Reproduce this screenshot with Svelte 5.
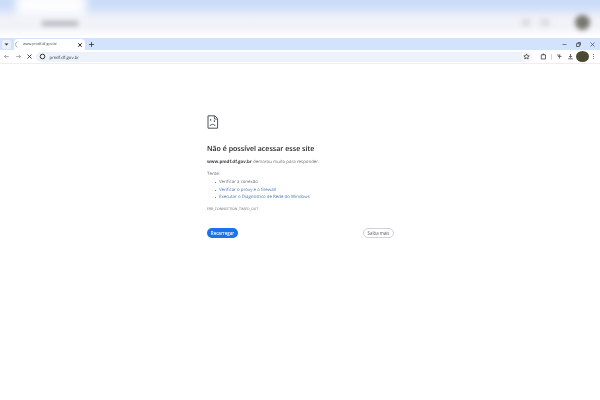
<script>
  const tips = [
    { text: 'Verificar a conexão', link: false },
    { text: 'Verificar o proxy e o firewall', link: true },
    { text: 'Executar o Diagnóstico de Rede do Windows', link: true }
  ];
</script>

<div class="screen">
  <div class="outer">
    <div class="outer-blue"></div>
    <div class="outer-tab"></div>
    <div class="outer-addr"></div>
    <div class="outer-icon one"></div>
    <div class="outer-icon two"></div>
    <div class="outer-avatar"></div>
  </div>

  <div class="tabbar">
    <div class="tabsearch">
      <svg width="7" height="7" viewBox="0 0 7 7"><path d="M1.5 2.5 L3.5 4.5 L5.5 2.5 Z" fill="#333"/></svg>
    </div>
    <div class="tab">
      <svg class="spin" width="7" height="7" viewBox="0 0 7 7"><path d="M3.5 0.8 A2.8 2.8 0 0 0 3.5 6.2" fill="none" stroke="#9aa0a6" stroke-width="0.8"/></svg>
      <span class="tabtitle">www.pmdf.df.gov.br</span>
      <svg class="tabclose" width="6" height="6" viewBox="0 0 6 6"><path d="M1.2 1.2 L4.8 4.8 M4.8 1.2 L1.2 4.8" stroke="#333" stroke-width="1"/></svg>
    </div>
    <svg class="newtab" width="7" height="7" viewBox="0 0 7 7"><path d="M3.5 1 V6 M1 3.5 H6" stroke="#444" stroke-width="0.9"/></svg>
    <div class="spacer"></div>
    <div class="winctl">
      <svg width="7" height="7" viewBox="0 0 7 7"><path d="M1.5 3.5 H5.5" stroke="#555" stroke-width="0.7"/></svg>
      <svg width="7" height="7" viewBox="0 0 7 7"><path d="M2.6 1.5 H5.5 V4.4 M1.5 2.6 H4.4 V5.5 H1.5 Z" fill="none" stroke="#444" stroke-width="0.8"/></svg>
      <svg width="7" height="7" viewBox="0 0 7 7"><path d="M1.5 1.5 L5.5 5.5 M5.5 1.5 L1.5 5.5" stroke="#444" stroke-width="0.7"/></svg>
    </div>
  </div>

  <div class="toolbar">
    <div class="navs">
      <svg width="7" height="7" viewBox="0 0 7 7"><path d="M5.8 3.5 H1.5 M3.2 1.8 L1.5 3.5 L3.2 5.2" fill="none" stroke="#8a8d91" stroke-width="0.7"/></svg>
      <svg width="7" height="7" viewBox="0 0 7 7"><path d="M1.2 3.5 H5.5 M3.8 1.8 L5.5 3.5 L3.8 5.2" fill="none" stroke="#8a8d91" stroke-width="0.7"/></svg>
      <svg width="7" height="7" viewBox="0 0 7 7"><path d="M1.5 1.5 L5.5 5.5 M5.5 1.5 L1.5 5.5" stroke="#333" stroke-width="0.9"/></svg>
    </div>
    <div class="omnibox">
      <svg class="site" width="7" height="7" viewBox="0 0 7 7"><circle cx="3.5" cy="3.5" r="2.3" fill="none" stroke="#333" stroke-width="1"/></svg>
      <span class="url">pmdf.df.gov.br</span>
      <div class="spacer"></div>
      <div class="star">
        <svg width="7" height="7" viewBox="0 0 7 7"><path d="M3.5 0.9 L4.3 2.7 L6.2 2.9 L4.8 4.1 L5.2 6 L3.5 5 L1.8 6 L2.2 4.1 L0.8 2.9 L2.7 2.7 Z" fill="none" stroke="#333" stroke-width="0.7"/></svg>
      </div>
    </div>
    <div class="tools">
      <svg class="ext" width="7" height="7" viewBox="0 0 7 7"><path d="M1.3 1.8 H5.5 V6 H1.3 Z M2.8 1.8 V1 H4 V1.8" fill="none" stroke="#444" stroke-width="0.8"/></svg>
      <span class="sep"></span>
      <svg class="cast" width="7" height="7" viewBox="0 0 7 7"><path d="M1 2 H4.5 M2 3.5 H5.5 M3.5 2 V5.5" fill="none" stroke="#555" stroke-width="0.8"/></svg>
      <svg class="dl" width="7" height="7" viewBox="0 0 7 7"><path d="M3.5 1 V4.4 M2 3 L3.5 4.5 L5 3 M1.2 5.8 H5.8" fill="none" stroke="#444" stroke-width="0.8"/></svg>
      <span class="avatar"></span>
      <svg class="menu" width="3" height="7" viewBox="0 0 3 7"><circle cx="1.5" cy="1.5" r="0.5" fill="#555"/><circle cx="1.5" cy="3.5" r="0.5" fill="#555"/><circle cx="1.5" cy="5.5" r="0.5" fill="#555"/></svg>
    </div>
  </div>

  <main class="page">
    <div class="content">
      <svg class="sad" width="12" height="14" viewBox="0 0 12 14">
        <path d="M1 0.8 H7.8 L10.6 3.6 V13.2 H1 Z" fill="none" stroke="#3c4043" stroke-width="0.9"/>
        <path d="M7.4 1 V4 H10.4" fill="none" stroke="#3c4043" stroke-width="0.8"/>
        <rect x="3" y="4.2" width="1.2" height="1.4" fill="#3c4043"/>
        <rect x="6.8" y="5.4" width="1.2" height="1.4" fill="#3c4043"/>
        <path d="M3 11 C4.2 8.8 6.8 8.8 8.4 11" fill="none" stroke="#3c4043" stroke-width="0.9"/>
      </svg>
      <h1>Não é possível acessar esse site</h1>
      <p class="lead"><strong>www.pmdf.df.gov.br</strong> demorou muito para responder.</p>
      <p class="try">Tente:</p>
      <ul>
        {#each tips as tip}
          <li class:link={tip.link}>{tip.text}</li>
        {/each}
      </ul>
      <p class="code">ERR_CONNECTION_TIMED_OUT</p>
      <div class="actions">
        <button class="reload">Recarregar</button>
        <button class="more">Saiba mais</button>
      </div>
    </div>
  </main>
</div>

<style>
  :global(body) { margin: 0; background: #fff; }
  .screen {
    width: 600px; height: 400px; overflow: hidden;
    display: flex; flex-direction: column;
    font-family: "Open Sans", "Noto Sans", sans-serif;
    color: #3c4043;
    filter: blur(0.3px);
    text-rendering: geometricPrecision;
  }
  .outer {
    height: 38px; flex: none; position: relative; overflow: hidden;
    background: linear-gradient(#f2f4fa 0, #f0f2f8 26px, #f9fafd 33px, #fff 37px);
  }
  .outer-blue {
    position: absolute; left: -10px; right: -10px; top: -10px; height: 22px;
    background: #cbdcf8; filter: blur(4px);
  }
  .outer-tab {
    position: absolute; left: 16px; top: -6px; width: 70px; height: 22px;
    background: #fdfdfe; filter: blur(5px);
  }
  .outer-addr {
    position: absolute; left: 42px; top: 21px; width: 36px; height: 5px;
    background: #b4b6bc; filter: blur(2.5px);
  }
  .outer-icon {
    position: absolute; top: 19px; width: 8px; height: 7px;
    background: #d9dadd; filter: blur(2.5px);
  }
  .one { left: 522px; }
  .two { left: 541px; }
  .outer-avatar {
    position: absolute; left: 575px; top: 15px; width: 15px; height: 15px; border-radius: 50%;
    background: #77776f; filter: blur(2.5px);
  }
  .tabbar {
    height: 12px; flex: none; background: #d3e3fd;
    display: flex; align-items: flex-end;
  }
  .tabsearch {
    width: 9px; height: 9px; margin: 0 3px 1.5px 2px; border-radius: 2px;
    background: #e9f0fb; display: flex; align-items: center; justify-content: center;
  }
  .tab {
    width: 71px; height: 11px; background: #fff; border-radius: 4px 4px 0 0;
    display: flex; align-items: center; padding: 0 2px 0 0; box-sizing: border-box;
  }
  .tabtitle { font-size: 3.6px; line-height: 6px; padding-top: 1px; margin-left: 2px; color: #44474a; white-space: nowrap; flex: 1; }
  .newtab { margin: 0 0 2.5px 3px; }
  .spacer { flex: 1; }
  .winctl { display: flex; gap: 7px; margin: 0 4px 2.5px 0; }
  .toolbar {
    height: 14px; flex: none; background: #fff; border-bottom: 1px solid #eceef1; box-sizing: border-box;
    display: flex; align-items: center;
  }
  .navs { display: flex; gap: 4.5px; margin-left: 3px; }
  .omnibox {
    width: 496px; height: 10px; margin-left: 3px; border-radius: 5px; background: #edf2fa;
    display: flex; align-items: center; padding: 0 0 0 3px; box-sizing: border-box;
  }
  .url { font-size: 4.3px; line-height: 6px; padding-top: 2px; margin-left: 3.5px; color: #3c4043; white-space: nowrap; }
  .star { width: 11px; height: 10px; display: flex; align-items: center; justify-content: center; background: #f4f6fb; border-radius: 5px; }
  .tools { display: flex; align-items: center; margin-left: 8px; }
  .sep { width: 0.6px; height: 6px; background: #d0d3d8; margin: 0 4px 0 4px; }
  .dl { margin-left: 4px; }
  .avatar { width: 13px; height: 11px; border-radius: 50%; background: #4d4a33; margin-left: 2px; }
  .menu { margin-left: 3px; }
  .page { flex: 1; background: #fff; padding: 51px 0 0 207px; }
  .content { width: 187px; }
  .sad { display: block; }
  h1 { margin: 15px 0 0; font-size: 7.05px; font-weight: 600; line-height: 11px; color: #202124; white-space: nowrap; }
  p { margin: 0; }
  .lead { margin-top: 4px; font-size: 4.4px; line-height: 7px; color: #6b6f74; white-space: nowrap; }
  .lead strong { color: #3c4043; font-weight: 700; }
  .try { margin-top: 5px; font-size: 4.4px; line-height: 7px; color: #6b6f74; }
  ul { list-style: none; margin: 1px 0 0; padding: 0 0 0 12px; font-size: 4.4px; line-height: 7.5px; color: #6b6f74; }
  li { white-space: nowrap; position: relative; }
  li::before {
    content: ""; position: absolute; left: -4.5px; top: 3px;
    width: 1.4px; height: 1.4px; border-radius: 50%; background: #4a4d52;
  }
  li.link { color: #4a76b4; }
  .code { margin-top: 5px; font-size: 3.5px; line-height: 6px; color: #6d7074; white-space: nowrap; }
  .actions { display: flex; justify-content: space-between; align-items: center; margin-top: 15px; }
  button { font-family: inherit; font-size: 4.4px; padding: 0; border-radius: 6px; white-space: nowrap; }
  .reload { width: 31px; height: 10px; background: #1a73e8; color: #fff; border: none; font-weight: 600; }
  .more { width: 31px; height: 10px; background: #fff; color: #5f6368; border: 0.7px solid #cfd2d6; }
</style>
